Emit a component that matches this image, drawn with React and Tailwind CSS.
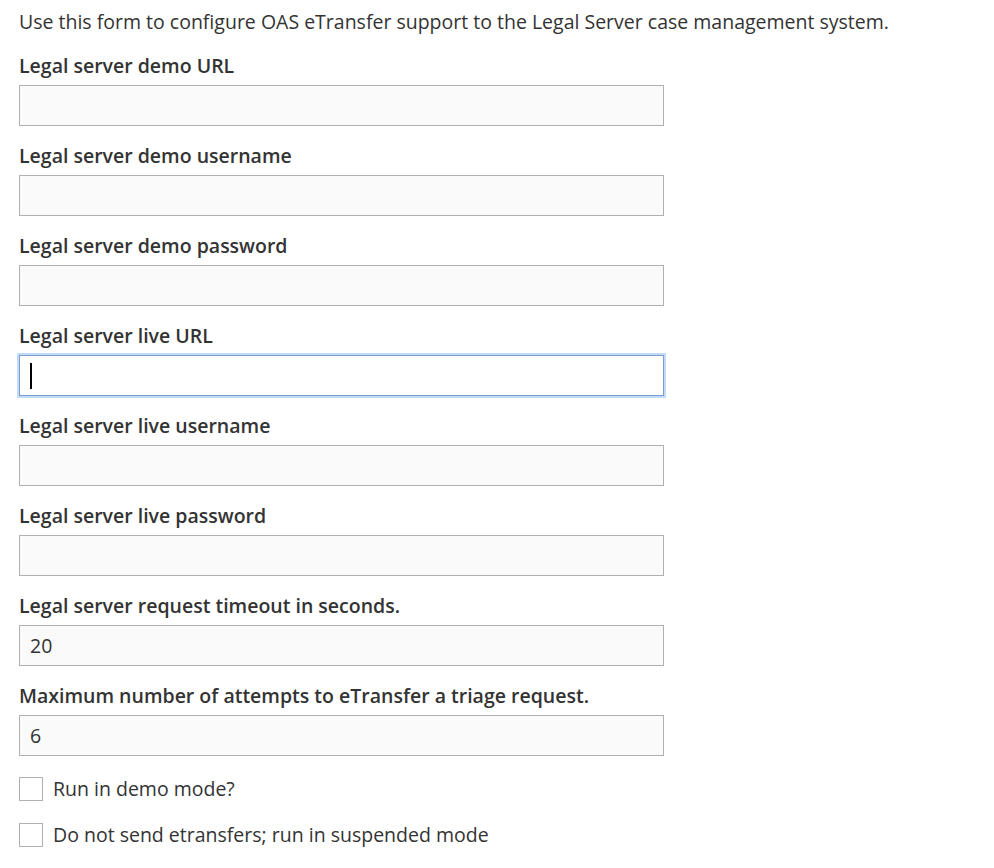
import React from 'react';

const fields = [
  { label: 'Legal server demo URL', value: '' },
  { label: 'Legal server demo username', value: '' },
  { label: 'Legal server demo password', value: '', type: 'password' },
  { label: 'Legal server live URL', value: '', focused: true },
  { label: 'Legal server live username', value: '' },
  { label: 'Legal server live password', value: '', type: 'password' },
  { label: 'Legal server request timeout in seconds.', value: '20' },
  { label: 'Maximum number of attempts to eTransfer a triage request.', value: '6' },
];

const Field = ({ label, value, type, focused }) => (
  <div className="mb-[18px]">
    <label className="block font-semibold leading-[24px] mb-[7px]">{label}</label>
    <div className="relative w-[645px]">
      <input
        type={type || 'text'}
        defaultValue={value}
        readOnly
        className={
          focused
            ? 'block w-full h-[41px] px-[10px] bg-white border border-[#7a9fcf] shadow-[0_0_0_2px_#c2dbf7] outline-none text-[19.5px] text-[#333]'
            : 'block w-full h-[41px] px-[10px] bg-[#fafafa] border border-[#b0b0b0] outline-none text-[19.5px] text-[#333]'
        }
      />
      {focused && <span className="absolute left-[11px] top-[8px] w-[2px] h-[26px] bg-black" />}
    </div>
  </div>
);

const App = () => {
  return (
    <div
      className="px-[19px] pt-[10px] text-[19.5px] text-[#333] bg-white min-h-screen"
      style={{ fontFamily: '"Open Sans", "Noto Sans", sans-serif' }}
    >
      <p className="leading-[24px] mb-[20px]">
        Use this form to configure OAS eTransfer support to the Legal Server case management system.
      </p>

      {fields.map((f) => (
        <Field key={f.label} {...f} />
      ))}

      <div className="flex flex-col gap-[22px] pt-[3px]">
        <label className="flex items-center gap-[10px] leading-[24px]">
          <span className="w-[24px] h-[24px] border border-[#b0b0b0] bg-white" />
          Run in demo mode?
        </label>
        <label className="flex items-center gap-[10px] leading-[24px]">
          <span className="w-[24px] h-[24px] border border-[#b0b0b0] bg-white" />
          Do not send etransfers; run in suspended mode
        </label>
      </div>
    </div>
  );
};

export default App;
